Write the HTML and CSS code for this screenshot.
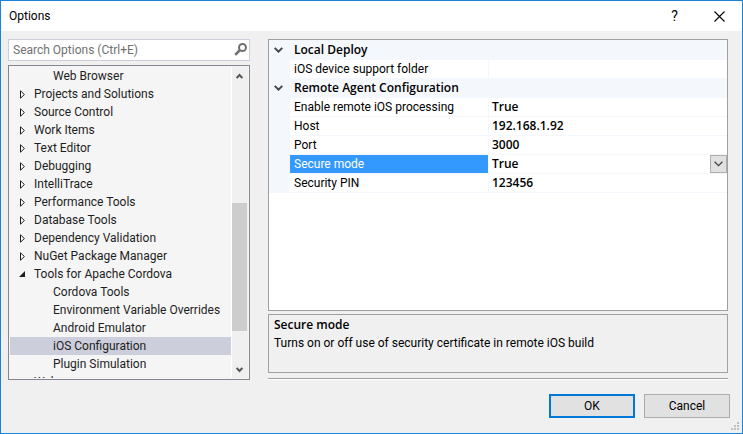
FILE: index.html
```html
<!DOCTYPE html>
<html lang="en">
<head>
<meta charset="utf-8">
<title>Options</title>
<link rel="stylesheet" href="styles.css">
</head>
<body>
<main class="dialog">
  <header class="titlebar">
    <h1 class="title">Options</h1>
    <button class="caption-button help" type="button" aria-label="Help">?</button>
    <button class="caption-button" type="button" aria-label="Close">
      <svg width="11" height="11" viewBox="0 0 11 11"><path d="M.5 .5l10 10M10.500 .5l-10 10" fill="none" stroke="#000" stroke-width="1.100"/></svg>
    </button>
  </header>

  <div class="content">
    <section class="sidebar">
      <div class="search">
        <input class="search-input" type="text" aria-label="Search Options" placeholder="Search Options (Ctrl+E)">
        <button class="search-button" type="button" aria-label="Search">
          <svg width="13" height="13" viewBox="0 0 13 13"><circle cx="8.500" cy="4.500" r="3.500" fill="none" stroke="#717171" stroke-width="2"/><path d="M6 7L1.200 11.800" fill="none" stroke="#717171" stroke-width="2.600"/></svg>
        </button>
      </div>
      <div class="tree-box">
        <ul class="tree">
          <li class="item child">Web Browser</li>
          <li class="item"><button class="expander" type="button" aria-label="Expand"><svg width="6" height="9" viewBox="0 0 6 9"><path d="M1.500 .8v7.400L5.400 4.500z" fill="#fff" stroke="#1e1e1e"/></svg></button>Projects and Solutions</li>
          <li class="item"><button class="expander" type="button" aria-label="Expand"><svg width="6" height="9" viewBox="0 0 6 9"><path d="M1.500 .8v7.400L5.400 4.500z" fill="#fff" stroke="#1e1e1e"/></svg></button>Source Control</li>
          <li class="item"><button class="expander" type="button" aria-label="Expand"><svg width="6" height="9" viewBox="0 0 6 9"><path d="M1.500 .8v7.400L5.400 4.500z" fill="#fff" stroke="#1e1e1e"/></svg></button>Work Items</li>
          <li class="item"><button class="expander" type="button" aria-label="Expand"><svg width="6" height="9" viewBox="0 0 6 9"><path d="M1.500 .8v7.400L5.400 4.500z" fill="#fff" stroke="#1e1e1e"/></svg></button>Text Editor</li>
          <li class="item"><button class="expander" type="button" aria-label="Expand"><svg width="6" height="9" viewBox="0 0 6 9"><path d="M1.500 .8v7.400L5.400 4.500z" fill="#fff" stroke="#1e1e1e"/></svg></button>Debugging</li>
          <li class="item"><button class="expander" type="button" aria-label="Expand"><svg width="6" height="9" viewBox="0 0 6 9"><path d="M1.500 .8v7.400L5.400 4.500z" fill="#fff" stroke="#1e1e1e"/></svg></button>IntelliTrace</li>
          <li class="item"><button class="expander" type="button" aria-label="Expand"><svg width="6" height="9" viewBox="0 0 6 9"><path d="M1.500 .8v7.400L5.400 4.500z" fill="#fff" stroke="#1e1e1e"/></svg></button>Performance Tools</li>
          <li class="item"><button class="expander" type="button" aria-label="Expand"><svg width="6" height="9" viewBox="0 0 6 9"><path d="M1.500 .8v7.400L5.400 4.500z" fill="#fff" stroke="#1e1e1e"/></svg></button>Database Tools</li>
          <li class="item"><button class="expander" type="button" aria-label="Expand"><svg width="6" height="9" viewBox="0 0 6 9"><path d="M1.500 .8v7.400L5.400 4.500z" fill="#fff" stroke="#1e1e1e"/></svg></button>Dependency Validation</li>
          <li class="item"><button class="expander" type="button" aria-label="Expand"><svg width="6" height="9" viewBox="0 0 6 9"><path d="M1.500 .8v7.400L5.400 4.500z" fill="#fff" stroke="#1e1e1e"/></svg></button>NuGet Package Manager</li>
          <li class="item"><button class="expander" type="button" aria-label="Collapse"><svg width="6" height="6" viewBox="0 0 6 6"><path d="M6 0v6H0z" fill="#1e1e1e"/></svg></button>Tools for Apache Cordova</li>
          <li class="item child">Cordova Tools</li>
          <li class="item child">Environment Variable Overrides</li>
          <li class="item child">Android Emulator</li>
          <li class="item child selected">iOS Configuration</li>
          <li class="item child">Plugin Simulation</li>
          <li class="item"><button class="expander" type="button" aria-label="Expand"></button>Web</li>
        </ul>
        <div class="scrollbar">
          <button class="scroll-button" type="button" aria-label="Scroll up"><svg width="7" height="6" viewBox="0 0 7 6"><path d="M.6 5L3.500 2 6.400 5" fill="none" stroke="#555" stroke-width="2"/></svg></button>
          <div class="track"><div class="thumb"></div></div>
          <button class="scroll-button" type="button" aria-label="Scroll down"><svg width="7" height="6" viewBox="0 0 7 6"><path d="M.6 1L3.500 4 6.400 1" fill="none" stroke="#555" stroke-width="2"/></svg></button>
        </div>
      </div>
    </section>

    <section class="details">
      <div class="grid-box">
        <table class="properties">
          <colgroup><col class="col-gutter"><col class="col-name"><col></colgroup>
          <tbody>
            <tr class="group first">
              <td class="gutter"><button class="toggle" type="button" aria-label="Collapse"><svg width="9" height="6" viewBox="0 0 9 6"><path d="M.7 .9l3.800 3.800L8.300 .9" fill="none" stroke="#444" stroke-width="1.900"/></svg></button></td>
              <th colspan="2">Local Deploy</th>
            </tr>
            <tr><td class="gutter"></td><td class="name">iOS device support folder</td><td class="value"></td></tr>
            <tr class="group">
              <td class="gutter"><button class="toggle" type="button" aria-label="Collapse"><svg width="9" height="6" viewBox="0 0 9 6"><path d="M.7 .9l3.800 3.800L8.300 .9" fill="none" stroke="#444" stroke-width="1.900"/></svg></button></td>
              <th colspan="2">Remote Agent Configuration</th>
            </tr>
            <tr><td class="gutter"></td><td class="name">Enable remote iOS processing</td><td class="value">True</td></tr>
            <tr><td class="gutter"></td><td class="name">Host</td><td class="value">192.168.1.92</td></tr>
            <tr><td class="gutter"></td><td class="name">Port</td><td class="value">3000</td></tr>
            <tr>
              <td class="gutter"></td>
              <td class="name active"><label for="secure-mode">Secure mode</label></td>
              <td class="value editor">
                <div class="dropdown">
                  <select id="secure-mode"><option>True</option><option>False</option></select>
                  <span class="drop-arrow"><svg width="9" height="6" viewBox="0 0 9 6"><path d="M.6 .8l3.900 3.900L8.400 .8" fill="none" stroke="#444" stroke-width="1.300"/></svg></span>
                </div>
              </td>
            </tr>
            <tr><td class="gutter"></td><td class="name">Security PIN</td><td class="value">123456</td></tr>
          </tbody>
        </table>
      </div>
      <div class="description">
        <h2>Secure mode</h2>
        <p>Turns on or off use of security certificate in remote iOS build</p>
      </div>
      <hr class="separator">
    </section>
  </div>

  <footer class="footer">
    <button class="button default" type="button">OK</button>
    <button class="button" type="button">Cancel</button>
  </footer>
  <svg class="grip" width="8" height="8" viewBox="0 0 8 8"><path d="M6 0h2v2H6zM3 3h2v2H3zM6 3h2v2H6zM0 6h2v2H0zM3 6h2v2H3zM6 6h2v2H6z" fill="#bfbfbf"/></svg>
</main>
</body>
</html>
```
FILE: styles.css
```css
* {
  box-sizing: border-box;
}

body {
  margin: 0;
  font: 12px/18px "Segoe UI", Roboto, sans-serif;
  color: #000;
}

button,
input,
select {
  margin: 0;
  padding: 0;
  border: 0;
  background: transparent;
  color: inherit;
  font: inherit;
}

svg {
  display: block;
}

.dialog {
  position: relative;
  display: flex;
  flex-direction: column;
  height: 100vh;
  border: 1px solid #1883d7;
  background: #f0f0f0;
}

.titlebar {
  display: flex;
  align-items: center;
  flex: none;
  height: 30px;
  padding-left: 8px;
  background: #fff;
}

.title {
  flex: 1;
  margin: 0;
  font-size: 12px;
  font-weight: 400;
}

.caption-button {
  display: flex;
  align-items: center;
  justify-content: center;
  width: 45px;
  height: 30px;
}

.help {
  font-size: 14px;
}

.content {
  display: flex;
  flex: 1;
  gap: 18px;
  min-height: 0;
  padding: 8px 14px 0 7px;
}

.sidebar {
  display: flex;
  flex: none;
  flex-direction: column;
  gap: 4px;
  width: 242px;
}

.search {
  display: flex;
  flex: none;
  height: 22px;
  border: 1px solid #cccedb;
  background: #fff;
}

.search-input {
  flex: 1;
  min-width: 0;
  padding-left: 4px;
  outline: 0;
}

.search-input::placeholder {
  color: #717171;
  opacity: 1;
}

.search-button {
  display: flex;
  align-items: center;
  justify-content: center;
  width: 18px;
  padding-bottom: 2px;
}

.tree-box {
  display: flex;
  flex: 1;
  min-height: 0;
  padding: 1px;
  border: 1px solid #828790;
  background: #f5f5f5;
}

.tree {
  flex: 1;
  margin: 0;
  padding: 0;
  overflow: hidden;
  list-style: none;
  color: #1e1e1e;
}

.item {
  display: flex;
  align-items: center;
  height: 18px;
  white-space: nowrap;
}

.child {
  padding-left: 43px;
}

.selected {
  background: #cccedb;
}

.expander {
  display: flex;
  align-items: center;
  justify-content: center;
  width: 24px;
  height: 18px;
}

.scrollbar {
  display: flex;
  flex: none;
  flex-direction: column;
  width: 17px;
  border-left: 1px solid #fff;
  background: #f0f0f0;
}

.scroll-button {
  display: flex;
  align-items: center;
  justify-content: center;
  width: 15px;
  height: 17px;
}

.track {
  display: flex;
  flex: 1;
  flex-direction: column;
  justify-content: flex-end;
  padding-bottom: 30px;
}

.thumb {
  width: 15px;
  height: 52%;
  background: #cdcdcd;
}

.details {
  display: flex;
  flex: 1;
  flex-direction: column;
  min-width: 0;
}

.grid-box {
  flex: 1;
  border: 1px solid #a0a0a0;
  background: #fff;
}

.properties {
  width: 100%;
  border-spacing: 0;
  table-layout: fixed;
}

.col-gutter {
  width: 21px;
}

.col-name {
  width: 199px;
}

.properties td,
.properties th {
  height: 19px;
  padding: 0 4px;
  border-bottom: 1px solid #f4f7fc;
  text-align: left;
  white-space: nowrap;
}

.properties .group th {
  background: #f4f7fc;
}

.properties .first td,
.properties .first th {
  height: 20px;
}

.properties th,
.properties .value,
.description h2 {
  font-family: "Segoe UI", "Open Sans", sans-serif;
  font-weight: 600;
}

.properties .gutter {
  padding: 0 0 0 5px;
  background: #f4f7fc;
}

.toggle {
  display: flex;
  align-items: center;
  width: 12px;
  height: 18px;
}

.properties .name {
  border-right: 1px solid #f4f7fc;
}

.properties .value {
  padding-left: 3px;
}

.properties .active {
  background: #3399ff;
  background-clip: padding-box;
  color: #fff;
}

.properties .editor {
  padding-right: 0;
}

.dropdown {
  position: relative;
  display: flex;
  height: 18px;
}

.dropdown select {
  flex: 1;
  appearance: none;
  outline: 0;
}

.drop-arrow {
  position: absolute;
  top: 0;
  right: 0;
  display: flex;
  align-items: center;
  justify-content: center;
  width: 17px;
  height: 18px;
  border: 1px solid #adadad;
  background: #e1e1e1;
  pointer-events: none;
}

.description {
  flex: none;
  height: 59px;
  margin-top: 3px;
  padding: 1px 5px;
  border: 1px solid #a0a0a0;
}

.description h2,
.description p {
  margin: 0;
  font-size: 12px;
}

.separator {
  flex: none;
  height: 2px;
  margin: 5px 0 0;
  border: 0;
  border-top: 1px solid #a0a0a0;
  background: #fff;
}

.footer {
  display: flex;
  flex: none;
  justify-content: flex-end;
  gap: 9px;
  padding: 14px 12px 15px;
}

.button {
  width: 86px;
  height: 24px;
  border: 1px solid #adadad;
  background: #e1e1e1;
}

.default {
  border: 2px solid #0078d7;
}

.grip {
  position: absolute;
  right: 3px;
  bottom: 3px;
}
```
